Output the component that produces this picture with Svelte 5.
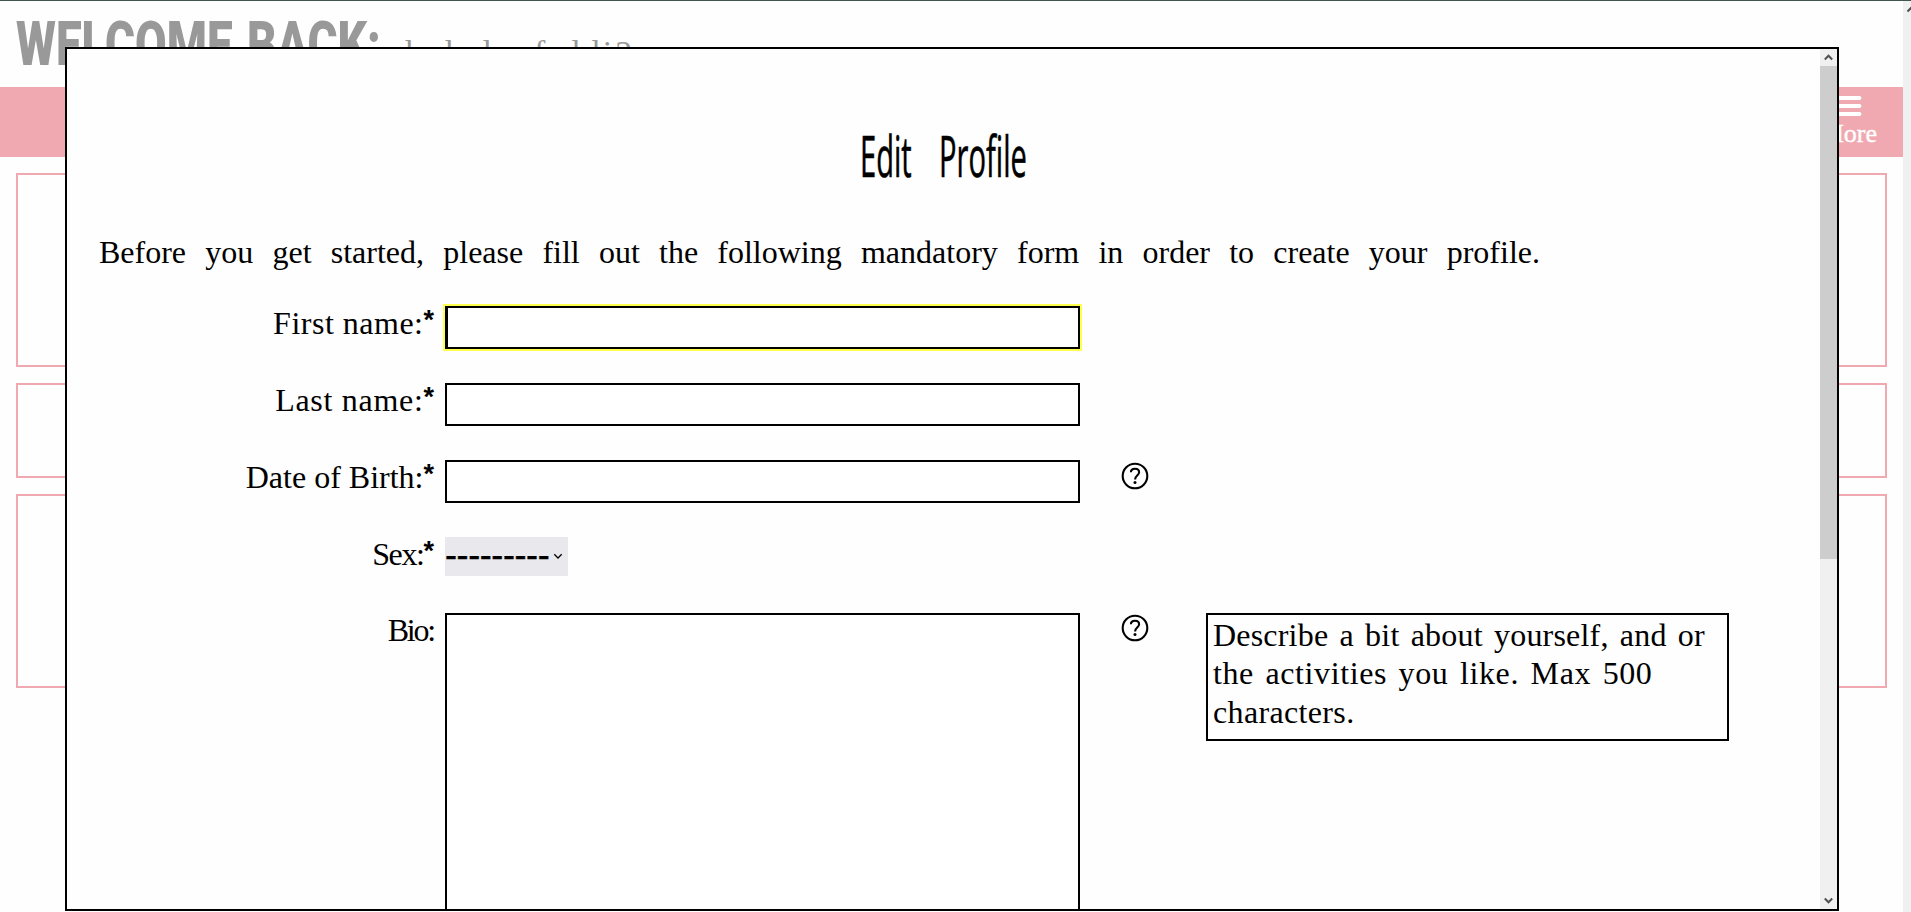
<script>
  const cards = [194, 95, 194];
  const fields = [
    { id: 'first', label: 'First name:', required: true, type: 'text', spacing: 0.5, focused: true },
    { id: 'last', label: 'Last name:', required: true, type: 'text', spacing: 0.7 },
    { id: 'dob', label: 'Date of Birth:', required: true, type: 'text', spacing: 0, help: true },
    { id: 'sex', label: 'Sex:', required: true, type: 'select', spacing: -1.4 },
    { id: 'bio', label: 'Bio:', required: false, type: 'area', spacing: -2.2, help: true }
  ];
  const hint = [
    { text: 'Describe a bit about yourself, and or', spacing: 0.2 },
    { text: 'the activities you like. Max 500', spacing: 0.6 },
    { text: 'characters.', spacing: 0.35 }
  ];
</script>

<div class="screen">
  <div class="page">
    <header>
      <h1><span>WELCOME BACK:</span></h1>
      <p class="user">dudadunfrddi2</p>
    </header>
    <nav>
      <div class="more">
        <svg width="26" height="22" viewBox="0 0 26 22">
          <path d="M1 3h22.5M1 11h22.5M1 19h22.5" stroke="#fff" stroke-width="3.8" stroke-linecap="round" />
        </svg>
        <span>More</span>
      </div>
    </nav>
    <main>
      {#each cards as height}
        <section class="card" style="height: {height}px"></section>
      {/each}
    </main>
  </div>
  <div class="page-bar">
    <svg width="8" height="17" viewBox="0 0 8 17"><path d="M4.5 10.5l4-4 4 4" fill="none" stroke="#505050" stroke-width="2" /></svg>
  </div>

  <div class="modal" role="dialog" aria-modal="true">
    <div class="content">
      <h2><span>Edit Profile</span></h2>
      <p class="intro">Before you get started, please fill out the following mandatory form in order to create your profile.</p>
      <form>
        {#each fields as f}
          <div class="row" class:tall={f.type === 'area'}>
            <label for={f.id}><span style="letter-spacing: {f.spacing}px">{f.label}</span>{#if f.required}<b>*</b>{/if}</label>
            <div class="control">
              {#if f.type === 'text'}
                <div id={f.id} class="input" class:focused={f.focused}></div>
              {:else if f.type === 'select'}
                <div id={f.id} class="select">
                  <span>---------</span>
                  <svg width="10" height="7" viewBox="0 0 10 7"><path d="M1.3 1.2L5 5l3.7-3.8" fill="none" stroke="#000" stroke-width="1.3" /></svg>
                </div>
              {:else}
                <div id={f.id} class="area"></div>
              {/if}
            </div>
            <div class="help">
              {#if f.help}
                <svg width="28" height="28" viewBox="0 0 28 28" fill="none" stroke="#000">
                  <circle cx="14" cy="14" r="12.3" stroke-width="2.1" />
                  <path d="M9.9 10.3C9.9 8 11.7 6.7 14 6.7s4.1 1.3 4.1 3.5c0 3.3-4 3.4-4 7.2" stroke-width="2.1" />
                  <circle cx="14" cy="20.6" r="1.5" fill="#000" stroke="none" />
                </svg>
              {/if}
            </div>
            {#if f.type === 'area'}
              <div class="hint">
                {#each hint as line}
                  <div style="letter-spacing: {line.spacing}px">{line.text}</div>
                {/each}
              </div>
            {/if}
          </div>
        {/each}
      </form>
    </div>
    <div class="bar">
      <svg width="17" height="17" viewBox="0 0 17 17"><path d="M4.8 10.5l3.7-3.8 3.7 3.8" fill="none" stroke="#505050" stroke-width="2" /></svg>
      <div class="thumb"></div>
      <svg class="down" width="17" height="17" viewBox="0 0 17 17"><path d="M4.8 6.5l3.7 3.8 3.7-3.8" fill="none" stroke="#505050" stroke-width="2" /></svg>
    </div>
  </div>
</div>

<style>
  :global(body) { margin: 0; background: #fff; overflow: hidden; }
  .screen {
    position: relative; display: flex; box-sizing: border-box;
    width: 1911px; height: 912px; overflow: hidden;
    border-top: 1px solid #40554b; background: #fefefe;
    font-family: "Liberation Serif", serif; font-size: 32px; color: #000;
  }
  h1, h2, p { margin: 0; font-weight: 400; }
  .page { flex: 1; min-width: 0; }
  header { display: flex; height: 86px; padding-left: 16px; box-sizing: border-box; color: #999; }
  h1 { width: 380px; padding-top: 12px; font: 900 62px/62px Roboto, sans-serif; word-spacing: 4px; white-space: nowrap; }
  h1 span { display: inline-block; transform: scaleX(0.74); transform-origin: 0 0; }
  .user { padding-top: 32px; font-size: 34px; line-height: 40px; letter-spacing: 3px; }
  nav { display: flex; justify-content: flex-end; height: 70px; background: #f0a9b1; color: #fff; }
  .more { display: flex; flex-direction: column; align-items: center; padding: 8px 26px 0 0; font-size: 26px; line-height: 28px; -webkit-text-stroke: 0.4px #fff; }
  .more span { margin-top: 3px; }
  main { display: flex; flex-direction: column; gap: 16px; padding: 16px; }
  .card { box-sizing: border-box; border: 2px solid #f0a9b1; }
  .page-bar { width: 8px; background: #f0f0f0; }
  .page-bar svg { display: block; }
  .modal {
    position: absolute; left: 65px; top: 46px; width: 1774px; height: 864px;
    box-sizing: border-box; display: flex; border: 2px solid #000; background: #fefefe; overflow: hidden;
  }
  .content { flex: 1; min-width: 0; padding-top: 76px; box-sizing: border-box; }
  h2 { display: flex; justify-content: center; height: 108px; font: 500 56px/60px "Open Sans", sans-serif; }
  h2 span { transform: scaleX(0.52); word-spacing: 38px; white-space: nowrap; -webkit-text-stroke: 0.6px #000; }
  .intro { padding-left: 32px; height: 73px; line-height: 38px; word-spacing: 11.2px; white-space: nowrap; }
  form { display: flex; flex-direction: column; }
  .row { display: grid; grid-template-columns: 367px 635px 111px 523px; height: 77px; }
  .row:nth-child(4) { height: 76px; }
  .row.tall { height: 400px; grid-template-columns: 367px 635px 126px 523px; }
  label { display: flex; justify-content: flex-end; padding-top: 1px; line-height: 32px; white-space: nowrap; }
  label b { font: 700 27px/26px "Liberation Sans", sans-serif; }
  .control { margin-left: 11px; width: 635px; }
  .input { box-sizing: border-box; height: 43px; border: 2px solid #000; background: #fff; }
  .input.focused { outline: 2px solid #ffff4d; box-shadow: inset 1px 0 #000; }
  .select {
    display: flex; align-items: center; justify-content: space-between; box-sizing: border-box;
    width: 123px; height: 39px; padding: 0 5px 0 0; background: #e9e9ed;
    font: 36px/36px "Liberation Sans", sans-serif; letter-spacing: -0.4px;
  }
  .select span { margin-top: -4px; -webkit-text-stroke: 0.4px #000; }
  .area { box-sizing: border-box; height: 400px; border: 2px solid #000; background: #fff; }
  .help { padding: 2px 0 0 52px; }
  .help svg { display: block; }
  .tall .help { padding-top: 1px; }
  .hint {
    margin-left: 11px; width: 523px; height: 128px; box-sizing: border-box; padding: 1px 0 0 5px;
    border: 2px solid #000; line-height: 38.4px; word-spacing: 3px; white-space: nowrap;
  }
  .bar { display: flex; flex-direction: column; width: 17px; background: #f0f0f0; }
  .bar svg { display: block; }
  .thumb { height: 493px; background: #cdcdcd; }
  .down { margin-top: auto; }
</style>
